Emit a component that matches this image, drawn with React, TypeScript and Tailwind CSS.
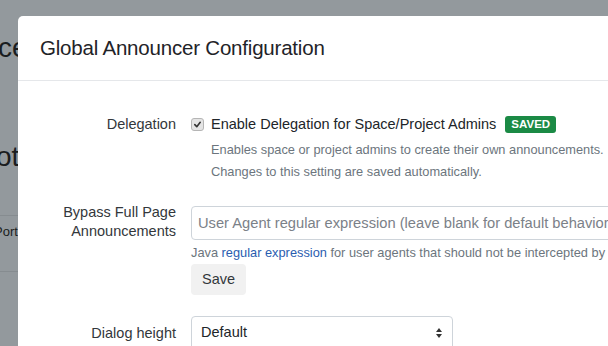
import React from "react";

function Checkbox() {
  return (
    <span className="inline-flex h-[13px] w-[13px] items-center justify-center rounded-[3px] border border-[#b5b5b5] bg-[#e4e4e4]">
      <svg width="9" height="9" viewBox="0 0 10 10">
        <path d="M2 5.2 L4.2 7.4 L8 2.6" fill="none" stroke="#333" strokeWidth="1.8" strokeLinecap="round" strokeLinejoin="round" />
      </svg>
    </span>
  );
}

export default function App() {
  return (
    <div className="relative h-[346px] w-[608px] overflow-hidden bg-[#93999d] font-['Liberation_Sans',Arial,sans-serif] text-[#212529]">
      {/* page behind the modal backdrop */}
      <div className="w-[18px] overflow-hidden text-[#1a1d20]">
        <div className="-ml-[2px] pt-[30px] text-[28px] leading-[36px]">ce</div>
        <div className="-ml-[4px] pt-[73px] text-[28px] leading-[36px]">ot</div>
        <div className="mt-[40px] h-[56px] border-t border-[#868c90] pt-[7px] text-[13px] leading-[18px] -ml-[6px]">Port</div>
        <div className="border-t border-[#868c90]" />
      </div>

      {/* modal */}
      <div className="absolute left-[18px] top-[16px] w-[640px] rounded-[5px] bg-white">
        <div className="border-b border-[#e5e7ea] px-[22px] py-[19px]">
          <h2 className="text-[20.5px] font-medium leading-[26px] tracking-[-0.2px] text-[#1f2328]">Global Announcer Configuration</h2>
        </div>

        <div className="pt-[33px]">
          {/* Delegation */}
          <div className="flex">
            <div className="w-[173px] shrink-0 pr-[15px] text-right text-[14.5px] leading-[20px] text-[#33373b]">Delegation</div>
            <div className="min-w-0 flex-1">
              <div className="flex items-center gap-[6px] text-[14.5px] leading-[20px]">
                <Checkbox />
                <span className="ml-[1px]">Enable Delegation for Space/Project Admins</span>
                <span className="ml-[3px] rounded-[3px] bg-[#1b8a45] px-[6px] text-[11.5px] font-bold leading-[17px] text-white">SAVED</span>
              </div>
              <div className="mt-[5px] pl-[20px] whitespace-nowrap text-[12.8px] leading-[22px] text-[#6c757d]">
                <div>Enables space or project admins to create their own announcements.</div>
                <div>Changes to this setting are saved automatically.</div>
              </div>
            </div>
          </div>

          {/* Bypass */}
          <div className="mt-[20px] flex">
            <div className="w-[173px] shrink-0 pr-[15px] text-right text-[14.5px] leading-[19px] text-[#33373b]">
              Bypass Full Page<br />Announcements
            </div>
            <div className="min-w-0 flex-1">
              <div className="mt-[3px] flex h-[34px] items-center rounded-[4px] border border-[#ced4da] px-[6px] text-[14.7px] whitespace-nowrap text-[#7b8188]">
                User Agent regular expression (leave blank for default behavior)
              </div>
              <div className="mt-[5px] whitespace-nowrap text-[12.8px] leading-[16px] text-[#6c757d]">
                Java <span className="text-[#2a5db0]">regular expression</span> for user agents that should not be intercepted by the announcer
              </div>
              <button className="mt-[3px] h-[31px] rounded-[4px] bg-[#f1f1f1] px-[11px] text-[14.5px] text-[#33373b]">Save</button>
            </div>
          </div>

          {/* Dialog height */}
          <div className="mt-[21px] flex items-center">
            <div className="w-[173px] shrink-0 pr-[15px] text-right text-[14.5px] leading-[20px] text-[#33373b]">Dialog height</div>
            <div className="flex h-[34px] w-[262px] items-center justify-between rounded-[4px] border border-[#ced4da] px-[9px] text-[14.5px] text-[#212529]">
              <span>Default</span>
              <svg width="8" height="12" viewBox="0 0 8 12">
                <path d="M4 1 L7 5 H1 Z" fill="#333" />
                <path d="M4 11 L7 7 H1 Z" fill="#333" />
              </svg>
            </div>
          </div>
        </div>
      </div>
    </div>
  );
}
